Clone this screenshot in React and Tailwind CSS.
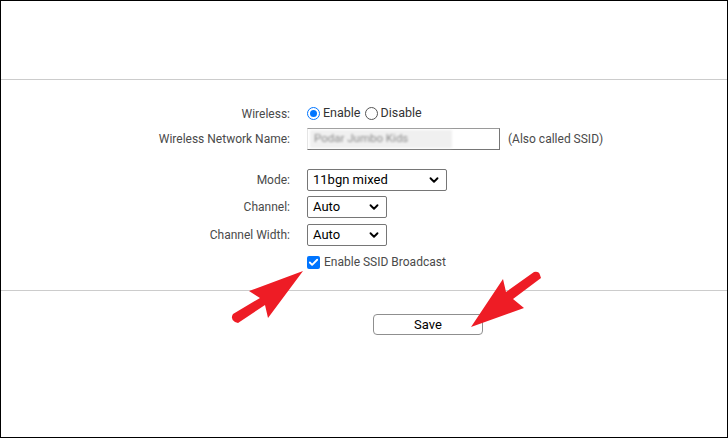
import { Check, ChevronDown } from 'lucide-react'

const font = { fontFamily: 'Roboto, "Liberation Sans", Arial, sans-serif' }

function Label({ children }) {
  return <div className="w-[289px] shrink-0 text-right text-[12px] text-[#4a4a4a]">{children}</div>
}

function Select({ value, width }) {
  return (
    <div
      className={`flex h-[22px] items-center justify-between rounded-[2px] border border-[#767676] bg-white pl-[5px] pr-[5px] text-[13px] text-black ${width}`}
    >
      <span>{value}</span>
      <ChevronDown size={14} strokeWidth={3.2} />
    </div>
  )
}

function Radio({ on }) {
  return on ? (
    <span className="flex h-[13px] w-[13px] shrink-0 items-center justify-center rounded-full border-[1.5px] border-[#0075ff]">
      <span className="h-[7px] w-[7px] rounded-full bg-[#0075ff]" />
    </span>
  ) : (
    <span className="block h-[13px] w-[13px] shrink-0 rounded-full border border-[#555]" />
  )
}

function Arrow({ d }) {
  return <path d={d} fill="#ee1c25" />
}

export default function App() {
  return (
    <div style={font} className="relative h-[438px] w-[728px] border border-black bg-white">
      <div className="h-[78px]" />
      <div className="h-px bg-[#cccccc]" />

      <div className="flex flex-col pt-[26px]">
        <div className="flex h-[15px] items-center">
          <Label>Wireless:</Label>
          <div className="ml-[17px] flex items-center text-[12.5px] text-[#333]">
            <Radio on />
            <span className="ml-[3px]">Enable</span>
            <span className="ml-[4px] flex"><Radio /></span>
            <span className="ml-[3px]">Disable</span>
          </div>
        </div>

        <div className="mt-[7px] flex h-[22px] items-center">
          <Label>Wireless Network Name:</Label>
          <div className="ml-[17px] flex h-[22px] w-[193px] items-center border border-[#767676] border-l-[#e5e5e5] border-t-[#9a9a9a] bg-white">
            <span className="ml-[2px] flex h-[18px] w-[142px] items-center bg-[#f0f0f0] pl-[4px] text-[11.5px] text-[#8a8a8a] blur-[1px]">
              Podar Jumbo Kids
            </span>
          </div>
          <span className="ml-[8px] text-[12px] text-[#4a4a4a]">(Also called SSID)</span>
        </div>

        <div className="mt-[19px] flex h-[21px] items-center">
          <Label>Mode:</Label>
          <div className="ml-[17px]">
            <Select value="11bgn mixed" width="w-[140px]" />
          </div>
        </div>

        <div className="mt-[6px] flex h-[22px] items-center">
          <Label>Channel:</Label>
          <div className="ml-[17px]">
            <Select value="Auto" width="w-[80px]" />
          </div>
        </div>

        <div className="mt-[6px] flex h-[22px] items-center">
          <Label>Channel Width:</Label>
          <div className="ml-[17px]">
            <Select value="Auto" width="w-[80px]" />
          </div>
        </div>

        <div className="mt-[9px] flex h-[14px] items-center">
          <div className="w-[289px] shrink-0" />
          <div className="ml-[17px] flex items-center">
            <span className="flex h-[13px] w-[13px] items-center justify-center rounded-[2px] bg-[#0075ff]">
              <Check size={11} strokeWidth={4} color="white" />
            </span>
            <span className="ml-[4px] text-[12px] text-[#4a4a4a]">Enable SSID Broadcast</span>
          </div>
        </div>
      </div>

      <div className="mt-[21px] h-px bg-[#cccccc]" />

      <div className="mt-[23px] flex">
        <div className="w-[372px] shrink-0" />
        <button className="h-[21px] w-[110px] rounded-[4px] border border-[#8f8f8f] bg-white text-[13px] text-black">
          Save
        </button>
      </div>

      <svg className="pointer-events-none absolute left-0 top-0" width="728" height="438">
        <Arrow d="M302 270 L248 290 L259 297 L232 313 Q229 318 234 321 L237 322 L264 304 L267 317 Z" />
        <Arrow d="M470 326 L502 278 L505 291 L533 271 Q538 270 539 274 L540 277 L512 298 L523 307 Z" />
      </svg>
    </div>
  )
}
